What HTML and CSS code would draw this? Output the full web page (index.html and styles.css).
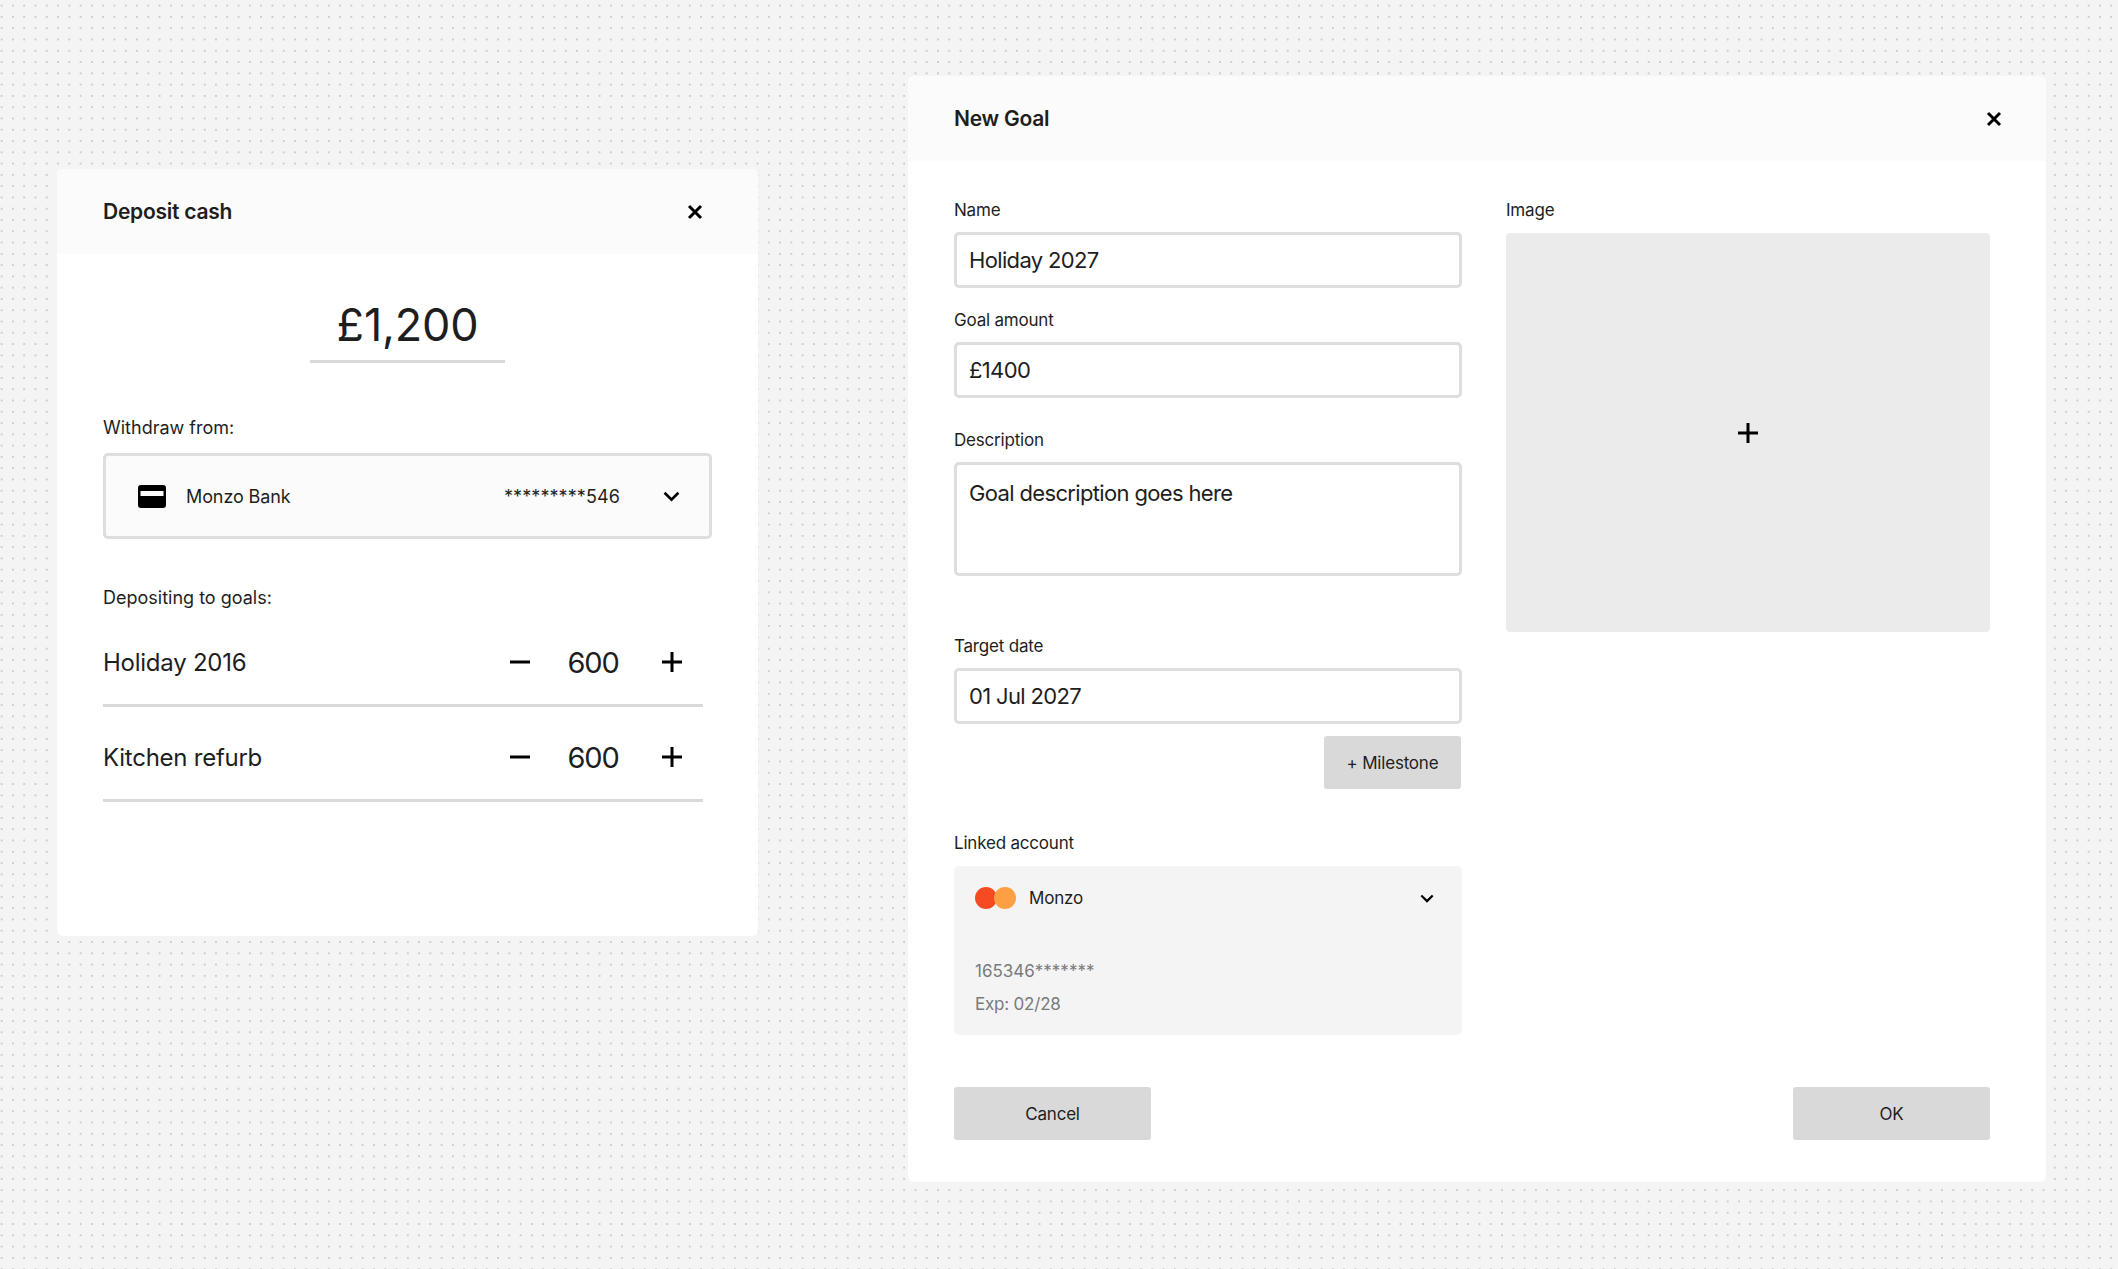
FILE: index.html
```html
<!DOCTYPE html>
<html>
<head>
  <title>Goals</title>
  <link rel="stylesheet" href="styles.css">
</head>
<body>
<!-- Deposit dialog -->
<section class="card deposit">
  <header class="card-header">
    <h2>Deposit cash</h2>
    <svg class="close" viewBox="0 0 16 16"><path d="M2 2l12 12M14 2L2 14"/></svg>
  </header>
  <div class="deposit-body">
    <div class="amount">£1,200</div>
    <p class="label withdraw-label">Withdraw from:</p>
    <div class="account-select">
      <svg class="card-icon" viewBox="0 0 28 23"><path d="M3 0h22a3 3 0 0 1 3 3v17a3 3 0 0 1-3 3H3a3 3 0 0 1-3-3V3a3 3 0 0 1 3-3zM2.500 6v5h23V6z" fill-rule="evenodd"/></svg>
      <span class="bank-name">Monzo Bank</span>
      <span class="bank-number">*********546</span>
      <svg class="chevron" viewBox="0 0 16 10"><path d="M1.500 1.500L8 8l6.500-6.500"/></svg>
    </div>
    <p class="label goals-label">Depositing to goals:</p>
    <div class="goal-row">
      <span class="goal-name">Holiday 2016</span>
      <svg class="step" viewBox="0 0 22 22"><path d="M0 11h20"/></svg>
      <span class="goal-value">600</span>
      <svg class="step" viewBox="0 0 22 22"><path d="M1 11h20M11 1v20"/></svg>
    </div>
    <div class="goal-row">
      <span class="goal-name">Kitchen refurb</span>
      <svg class="step" viewBox="0 0 22 22"><path d="M0 11h20"/></svg>
      <span class="goal-value">600</span>
      <svg class="step" viewBox="0 0 22 22"><path d="M1 11h20M11 1v20"/></svg>
    </div>
  </div>
</section>

<!-- New goal dialog -->
<section class="card new-goal">
  <header class="card-header">
    <h2>New Goal</h2>
    <svg class="close" viewBox="0 0 16 16"><path d="M2 2l12 12M14 2L2 14"/></svg>
  </header>
  <div class="goal-form">
    <div class="col-left">
      <label class="label field-label">Name</label>
      <div class="input">Holiday 2027</div>
      <label class="label field-label amount-label">Goal amount</label>
      <div class="input">£1400</div>
      <label class="label field-label desc-label">Description</label>
      <div class="input textarea">Goal description goes here</div>
      <label class="label field-label date-label">Target date</label>
      <div class="input">01 Jul 2027</div>
      <div class="milestone-row"><button class="btn milestone">+ Milestone</button></div>
      <label class="label field-label linked-label">Linked account</label>
      <div class="linked">
        <div class="linked-top">
          <span class="mc"><i class="mc-red"></i><i class="mc-orange"></i></span>
          <span class="linked-name">Monzo</span>
          <svg class="chevron small" viewBox="0 0 16 10"><path d="M1.500 1.500L8 8l6.500-6.500"/></svg>
        </div>
        <div class="linked-line first">165346*******</div>
        <div class="linked-line">Exp: 02/28</div>
      </div>
    </div>
    <div class="col-right">
      <label class="label field-label">Image</label>
      <div class="image-drop">
        <svg class="step" viewBox="0 0 22 22"><path d="M1 11h20M11 1v20"/></svg>
      </div>
    </div>
  </div>
  <footer class="card-footer">
    <button class="btn wide">Cancel</button>
    <button class="btn wide">OK</button>
  </footer>
</section>
</body>
</html>
```

FILE: styles.css
```css
* {
  box-sizing: border-box;
}

html, body {
  height: 100%;
}

body {
  margin: 0;
  display: flex;
  align-items: flex-start;
  padding-left: 57px;
  overflow: hidden;
  font-family: Inter, sans-serif;
  color: #1e1e1e;
  background-color: #f4f4f4;
  background-image: radial-gradient(circle, #b8b8b8 0.5px, transparent 1px);
  background-size: 11.29px 11.29px;
  background-position: -4px 0;
}

.card {
  background: #fff;
  border-radius: 6px;
  overflow: hidden;
}

.deposit {
  width: 701px;
  height: 767px;
  margin-top: 169px;
}

.new-goal {
  width: 1138px;
  height: 1106px;
  margin-top: 76px;
  margin-left: 150px;
}

.card-header {
  height: 85px;
  padding: 0 44px 0 46px;
  display: flex;
  align-items: center;
  justify-content: space-between;
  background: #fbfbfb;
}

.deposit .card-header {
  padding-right: 55px;
}

.card-header h2 {
  margin: 0;
  font-size: 21px;
  font-weight: 600;
  letter-spacing: -0.25px;
}

.close {
  width: 16px;
  height: 16px;
  fill: none;
  stroke: #000;
  stroke-width: 3;
}

.label {
  display: block;
  margin: 0;
  font-size: 18px;
  line-height: 22px;
}

.field-label {
  font-size: 17px;
  letter-spacing: -0.2px;
}

/* Deposit dialog */
.deposit-body {
  padding: 0 46px;
}

.amount {
  width: 195px;
  margin: 43px auto 0;
  padding-bottom: 7px;
  border-bottom: 3px solid #d9d9d9;
  font-size: 45px;
  line-height: 56px;
  letter-spacing: -0.2px;
  text-align: center;
}

.withdraw-label {
  margin-top: 54px;
}

.account-select {
  height: 86px;
  margin-top: 14px;
  padding: 0 29px 0 32px;
  display: flex;
  align-items: center;
  background: #fbfbfb;
  border: 3px solid #dedede;
  border-radius: 5px;
  font-size: 18px;
}

.card-icon {
  width: 28px;
  height: 23px;
  margin-right: 20px;
}

.bank-name {
  flex: 1;
  letter-spacing: -0.1px;
}

.bank-number {
  margin-right: 43px;
  letter-spacing: 0.1px;
}

.chevron {
  width: 17px;
  height: 11px;
  fill: none;
  stroke: #000;
  stroke-width: 2.500;
}

.goals-label {
  margin-top: 48px;
  margin-bottom: 3px;
}

.goal-row {
  width: 600px;
  height: 95px;
  padding: 8px 20px 0 0;
  display: flex;
  align-items: center;
  border-bottom: 3px solid #d9d9d9;
}

.goal-name {
  flex: 1;
  font-size: 24px;
  letter-spacing: -0.25px;
}

.goal-value {
  width: 122px;
  margin-right: 7px;
  font-size: 29px;
  letter-spacing: -1.2px;
  text-align: center;
}

.step {
  width: 22px;
  height: 22px;
  fill: none;
  stroke: #000;
  stroke-width: 3;
}

/* New goal dialog */
.goal-form {
  padding: 38px 56px 0 46px;
  display: grid;
  grid-template-columns: 508px 484px;
  column-gap: 44px;
}

.input {
  height: 56px;
  margin-top: 11px;
  padding: 0 12px;
  display: flex;
  align-items: center;
  border: 3px solid #dedede;
  border-radius: 5px;
  background: #fff;
  font-size: 22px;
  letter-spacing: -0.65px;
}

.textarea {
  height: 114px;
  padding-top: 15px;
  align-items: flex-start;
}

.amount-label {
  margin-top: 21px;
}

.desc-label {
  margin-top: 31px;
}

.date-label {
  margin-top: 59px;
}

.milestone-row {
  margin-top: 12px;
  padding-right: 1px;
  display: flex;
  justify-content: flex-end;
}

.btn {
  border: none;
  border-radius: 3px;
  background: #d9d9d9;
  color: #1e1e1e;
  font-family: inherit;
  font-size: 17px;
  letter-spacing: -0.2px;
}

.milestone {
  width: 137px;
  height: 53px;
}

.linked-label {
  margin-top: 43px;
}

.linked {
  height: 169px;
  margin-top: 12px;
  padding: 21px 28px 0 21px;
  background: #f4f4f4;
  border-radius: 5px;
}

.linked-top {
  display: flex;
  align-items: center;
  font-size: 17px;
  letter-spacing: -0.2px;
}

.mc {
  position: relative;
  width: 41px;
  height: 22px;
  margin-right: 13px;
}

.mc i {
  position: absolute;
  top: 0;
  width: 22px;
  height: 22px;
  border-radius: 50%;
}

.mc-red {
  left: 0;
  background: #f64a22;
}

.mc-orange {
  left: 19px;
  background: #ff9f43;
}

.linked-name {
  flex: 1;
}

.small {
  width: 14px;
  height: 9px;
}

.linked-line {
  margin-top: 11px;
  font-size: 17px;
  line-height: 22px;
  letter-spacing: -0.2px;
  color: #7a7a7a;
}

.linked-line.first {
  margin-top: 51px;
  letter-spacing: 0;
}

.image-drop {
  height: 399px;
  margin-top: 12px;
  display: flex;
  align-items: center;
  justify-content: center;
  background: #ebebeb;
  border-radius: 4px;
}

.card-footer {
  margin-top: 52px;
  padding: 0 56px 0 46px;
  display: flex;
  justify-content: space-between;
}

.wide {
  width: 197px;
  height: 53px;
}
```
